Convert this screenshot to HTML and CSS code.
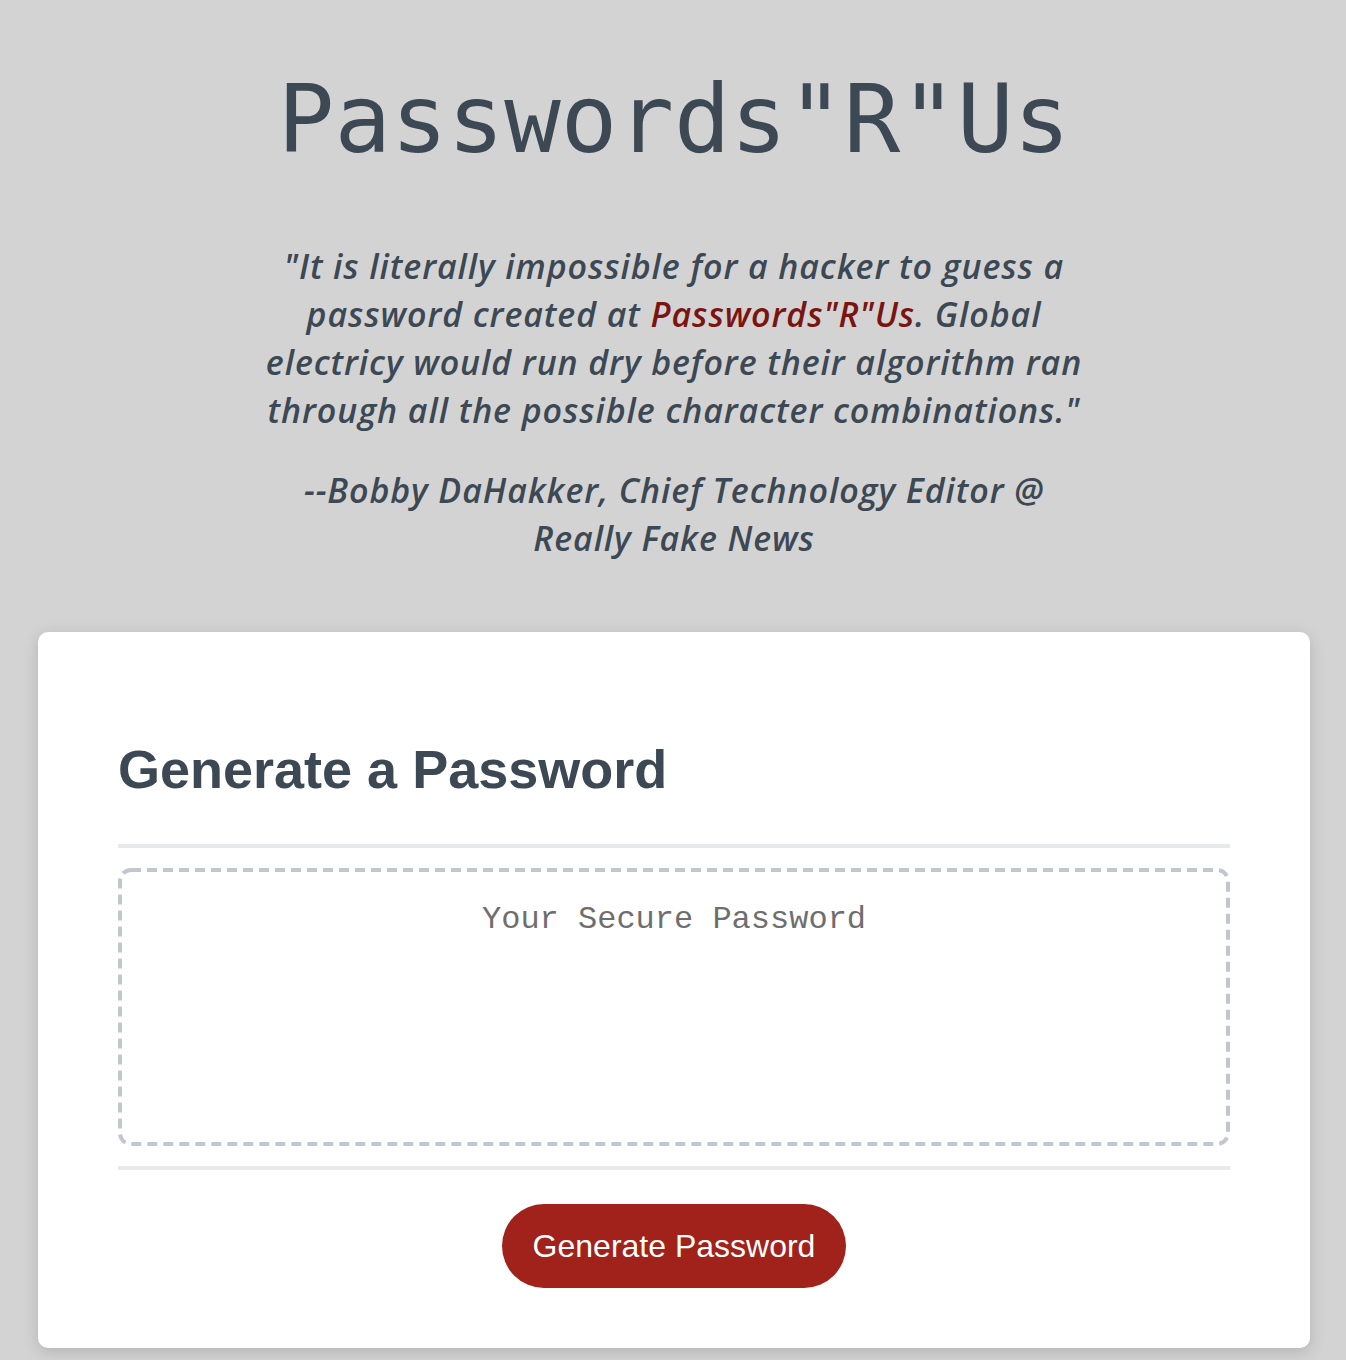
FILE: index.html
```html
<!DOCTYPE html>
<html lang="en">
<head>
<meta charset="UTF-8">
<title>Passwords"R"Us</title>
<link rel="stylesheet" href="styles.css">
</head>
<body>
<div class="wrapper">
  <header class="header">
    <h1 class="title">Passwords"R"Us</h1>
    <div class="quote">
      <p class="quote-text">"It is literally impossible for a hacker to guess a password created at <span class="brand">Passwords"R"Us</span>. Global electricy would run dry before their algorithm ran through all the possible character combinations."</p>
      <p class="quote-author">--Bobby DaHakker, Chief Technology Editor @ Really Fake News</p>
    </div>
  </header>
  <main class="card">
    <div class="card-header">
      <h2 class="card-title">Generate a Password</h2>
    </div>
    <div class="card-body">
      <div class="password-box">
        <textarea class="password" readonly placeholder="Your Secure Password" aria-label="Generated Password"></textarea>
        <svg class="password-border" width="1112" height="278" viewBox="0 0 1112 278" aria-hidden="true">
          <rect x="2" y="2" width="1108" height="274" rx="11" ry="11" fill="none" stroke="#c0c7cf" stroke-width="4" stroke-dasharray="10 6"></rect>
        </svg>
      </div>
    </div>
    <div class="card-footer">
      <button class="btn" type="button">Generate Password</button>
    </div>
  </main>
</div>
</body>
</html>
```

FILE: styles.css
```css
*, *::before, *::after {
  box-sizing: border-box;
}

html, body {
  margin: 0;
  padding: 0;
}

body {
  background-color: #d3d3d3;
  font-family: "Liberation Sans", Arial, sans-serif;
  color: #3c4853;
}

.wrapper {
  padding: 0 36px 12px 38px;
}

.header {
  text-align: center;
  padding-top: 73px;
}

.title {
  margin: 0;
  font-family: "DejaVu Sans Mono", "Liberation Mono", monospace;
  font-weight: normal;
  font-size: 94px;
  line-height: 94px;
  color: #3c4853;
}

.quote {
  max-width: 830px;
  margin: 75px auto 0;
  font-family: "Open Sans", Lato, sans-serif;
  font-style: italic;
  font-weight: 600;
  font-size: 34px;
  letter-spacing: 0.9px;
  line-height: 48px;
  color: #3c4853;
}

.quote p {
  margin: 0;
}

.quote .quote-author {
  margin-top: 32px;
}

.brand {
  color: #7b1411;
}

.card {
  display: block;
  margin-top: 70px;
  background: #ffffff;
  border-radius: 10px;
  box-shadow: rgba(0, 0, 0, 0.15) 0 4px 16px 0;
  padding: 60px 80px 60px;
}

.card-title {
  margin: 46px 0 44px;
  font-size: 54px;
  line-height: 62px;
  font-weight: bold;
  color: #3c4853;
}

.card-header::after,
.card-footer::before {
  content: "";
  display: block;
  width: 100%;
  height: 4px;
  background: #e7e9eb;
}

.password-box {
  position: relative;
  margin: 20px 0;
  height: 278px;
}

.password {
  display: block;
  width: 100%;
  height: 278px;
  margin: 0;
  padding: 34px 34px 0;
  border: none;
  border-radius: 12px;
  resize: none;
  overflow: hidden;
  font-family: "Liberation Mono", "Courier New", monospace;
  font-size: 32px;
  line-height: 36px;
  text-align: center;
  color: #3c4853;
  background: #ffffff;
  outline: none;
}

.password::placeholder {
  color: #6e6e6e;
}

.password-border {
  position: absolute;
  top: 0;
  left: 0;
  width: 100%;
  height: 100%;
  pointer-events: none;
}

.card-footer {
  display: flex;
  flex-direction: column;
  align-items: center;
}

.btn {
  margin-top: 34px;
  height: 84px;
  width: 344px;
  border: none;
  border-radius: 42px;
  background-color: #a0221a;
  color: #ffffff;
  font-family: "Liberation Sans", Arial, sans-serif;
  font-size: 32px;
  line-height: 32px;
  padding: 0;
  cursor: pointer;
}
```
